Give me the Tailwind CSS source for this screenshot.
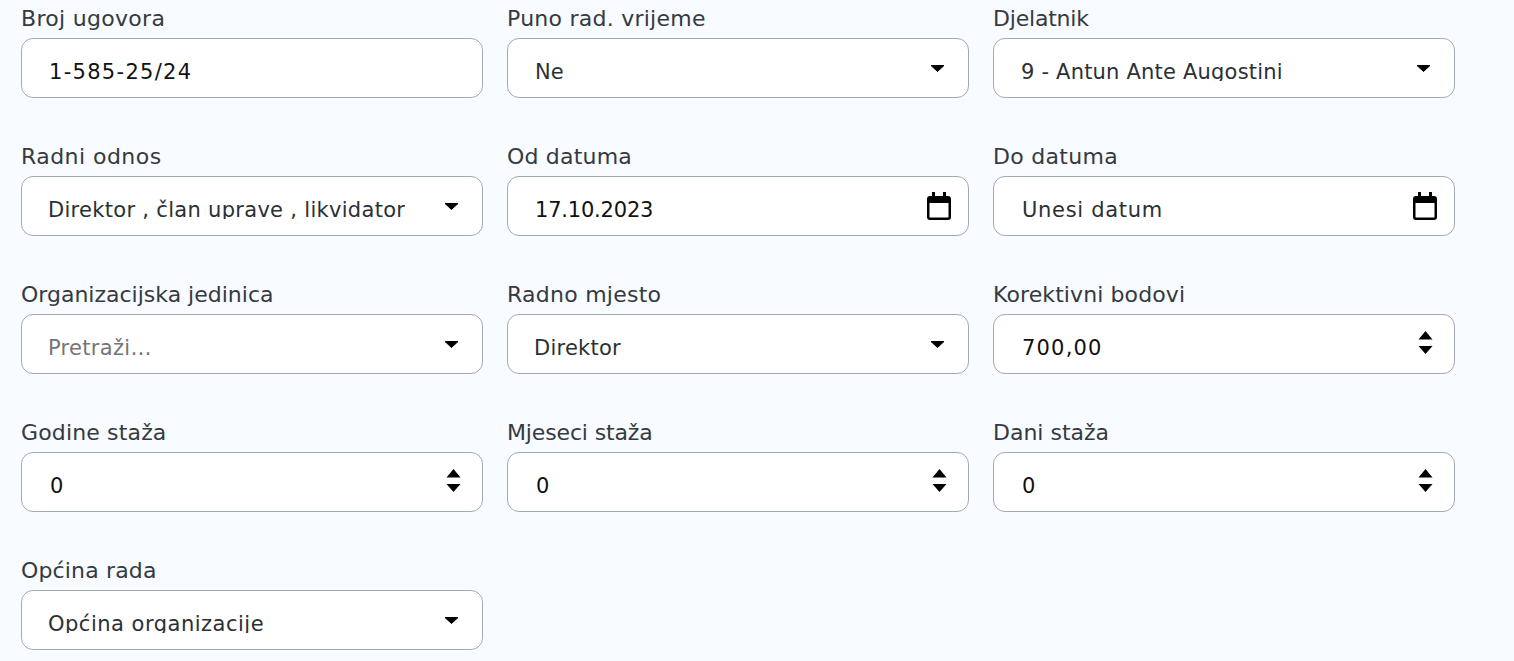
<!DOCTYPE html>
<html lang="hr">
<head>
<meta charset="UTF-8">
<title>Ugovor</title>
<script src="https://cdn.jsdelivr.net/npm/@tailwindcss/browser@4"></script>
</head>
<body class="bg-[#f8fbff] h-[661px] overflow-hidden font-['DejaVu_Sans',sans-serif] text-[#2b3035]">
<div class="grid grid-cols-[462px_462px_462px] gap-x-[24px] gap-y-[44px] pl-[21px] pt-[4px] text-[21px]">

  <div>
    <label class="block h-[34px] leading-[30px] text-[22px] text-[#343a40] tracking-[0.3px]">Broj ugovora</label>
    <div class="h-[60px] bg-white border border-[#a3a9b3] rounded-[12px] flex items-center justify-between pl-[27px] pr-[21px] pt-[10px] text-[#111]"><span class="tracking-[1.3px]">1-585-25/24</span></div>
  </div>
  <div>
    <label class="block h-[34px] leading-[30px] text-[22px] text-[#343a40] tracking-[0.25px]">Puno rad. vrijeme</label>
    <div class="h-[60px] bg-white border border-[#a3a9b3] rounded-[12px] flex items-center justify-between pl-[27px] pr-[23px] pt-[10px]"><span>Ne</span>
      <svg class="w-[15px] h-[7px] -mt-[10px]" viewBox="0 0 15 7"><path d="M1 0.5h13L7.5 6.5z" fill="#000" stroke="#000" stroke-linejoin="round"/></svg></div>
  </div>
  <div>
    <label class="block h-[34px] leading-[30px] text-[22px] text-[#343a40] tracking-[-0.2px]">Djelatnik</label>
    <div class="h-[60px] bg-white border border-[#a3a9b3] rounded-[12px] flex items-center justify-between pl-[27px] pr-[23px] pt-[10px]"><span class="self-start h-[32px] leading-[47px] overflow-hidden tracking-[0.2px]">9 - Antun Ante Augostini</span>
      <svg class="w-[15px] h-[7px] -mt-[10px]" viewBox="0 0 15 7"><path d="M1 0.5h13L7.5 6.5z" fill="#000" stroke="#000" stroke-linejoin="round"/></svg></div>
  </div>

  <div>
    <label class="block h-[34px] leading-[30px] text-[22px] text-[#343a40] tracking-[0.45px]">Radni odnos</label>
    <div class="h-[60px] bg-white border border-[#a3a9b3] rounded-[12px] flex items-center justify-between pl-[26px] pr-[23px] pt-[10px]"><span class="self-start h-[32px] leading-[47px] overflow-hidden tracking-[0.3px]">Direktor , član uprave , likvidator</span>
      <svg class="w-[15px] h-[7px] -mt-[10px]" viewBox="0 0 15 7"><path d="M1 0.5h13L7.5 6.5z" fill="#000" stroke="#000" stroke-linejoin="round"/></svg></div>
  </div>
  <div>
    <label class="block h-[34px] leading-[30px] text-[22px] text-[#343a40] tracking-[0.2px]">Od datuma</label>
    <div class="h-[60px] bg-white border border-[#a3a9b3] rounded-[12px] flex items-center justify-between pl-[27px] pr-[16px] pt-[10px] text-[#111]"><span class="tracking-[-0.2px]">17.10.2023</span>
      <svg class="w-[26px] h-[28px] -mt-[10px]" viewBox="0 0 26 28"><path d="M6 0h3v4h8V0h3v4h2a3 3 0 0 1 3 3v18a3 3 0 0 1-3 3H4a3 3 0 0 1-3-3V7a3 3 0 0 1 3-3h2zM3.500 11v14.500h19V11z" fill="#000" fill-rule="evenodd"/></svg></div>
  </div>
  <div>
    <label class="block h-[34px] leading-[30px] text-[22px] text-[#343a40] tracking-[0.3px]">Do datuma</label>
    <div class="h-[60px] bg-white border border-[#a3a9b3] rounded-[12px] flex items-center justify-between pl-[28px] pr-[16px] pt-[10px]"><span class="tracking-[0.7px]">Unesi datum</span>
      <svg class="w-[26px] h-[28px] -mt-[10px]" viewBox="0 0 26 28"><path d="M6 0h3v4h8V0h3v4h2a3 3 0 0 1 3 3v18a3 3 0 0 1-3 3H4a3 3 0 0 1-3-3V7a3 3 0 0 1 3-3h2zM3.500 11v14.500h19V11z" fill="#000" fill-rule="evenodd"/></svg></div>
  </div>

  <div>
    <label class="block h-[34px] leading-[30px] text-[22px] text-[#343a40]">Organizacijska jedinica</label>
    <div class="h-[60px] bg-white border border-[#a3a9b3] rounded-[12px] flex items-center justify-between pl-[26px] pr-[23px] pt-[10px] text-[#757575]"><span class="tracking-[0.3px]">Pretraži…</span>
      <svg class="w-[15px] h-[7px] -mt-[10px]" viewBox="0 0 15 7"><path d="M1 0.5h13L7.5 6.5z" fill="#000" stroke="#000" stroke-linejoin="round"/></svg></div>
  </div>
  <div>
    <label class="block h-[34px] leading-[30px] text-[22px] text-[#343a40] tracking-[0.25px]">Radno mjesto</label>
    <div class="h-[60px] bg-white border border-[#a3a9b3] rounded-[12px] flex items-center justify-between pl-[26px] pr-[23px] pt-[10px]"><span class="tracking-[0.25px]">Direktor</span>
      <svg class="w-[15px] h-[7px] -mt-[10px]" viewBox="0 0 15 7"><path d="M1 0.5h13L7.5 6.5z" fill="#000" stroke="#000" stroke-linejoin="round"/></svg></div>
  </div>
  <div>
    <label class="block h-[34px] leading-[30px] text-[22px] text-[#343a40] tracking-[0.1px]">Korektivni bodovi</label>
    <div class="h-[60px] bg-white border border-[#a3a9b3] rounded-[12px] flex items-center justify-between pl-[28px] pr-[21px] pt-[10px] text-[#111]"><span class="tracking-[1.2px]">700,00</span>
      <svg class="w-[15px] h-[23px] -mt-[13px]" viewBox="0 0 15 23"><path d="M7.500 0l7 8.500H.5zM.5 15h14l-7 8z" fill="#000"/></svg></div>
  </div>

  <div>
    <label class="block h-[34px] leading-[30px] text-[22px] text-[#343a40] tracking-[0.15px]">Godine staža</label>
    <div class="h-[60px] bg-white border border-[#a3a9b3] rounded-[12px] flex items-center justify-between pl-[28px] pr-[21px] pt-[10px] text-[#111]"><span>0</span>
      <svg class="w-[15px] h-[23px] -mt-[13px]" viewBox="0 0 15 23"><path d="M7.500 0l7 8.500H.5zM.5 15h14l-7 8z" fill="#000"/></svg></div>
  </div>
  <div>
    <label class="block h-[34px] leading-[30px] text-[22px] text-[#343a40] tracking-[-0.15px]">Mjeseci staža</label>
    <div class="h-[60px] bg-white border border-[#a3a9b3] rounded-[12px] flex items-center justify-between pl-[28px] pr-[21px] pt-[10px] text-[#111]"><span>0</span>
      <svg class="w-[15px] h-[23px] -mt-[13px]" viewBox="0 0 15 23"><path d="M7.500 0l7 8.500H.5zM.5 15h14l-7 8z" fill="#000"/></svg></div>
  </div>
  <div>
    <label class="block h-[34px] leading-[30px] text-[22px] text-[#343a40]">Dani staža</label>
    <div class="h-[60px] bg-white border border-[#a3a9b3] rounded-[12px] flex items-center justify-between pl-[28px] pr-[21px] pt-[10px] text-[#111]"><span>0</span>
      <svg class="w-[15px] h-[23px] -mt-[13px]" viewBox="0 0 15 23"><path d="M7.500 0l7 8.500H.5zM.5 15h14l-7 8z" fill="#000"/></svg></div>
  </div>

  <div>
    <label class="block h-[34px] leading-[30px] text-[22px] text-[#343a40] tracking-[0.15px]">Općina rada</label>
    <div class="h-[60px] bg-white border border-[#a3a9b3] rounded-[12px] flex items-center justify-between pl-[26px] pr-[23px] pt-[10px]"><span class="self-start h-[32px] leading-[47px] overflow-hidden tracking-[0.5px]">Općina organizacije</span>
      <svg class="w-[15px] h-[7px] -mt-[10px]" viewBox="0 0 15 7"><path d="M1 0.5h13L7.5 6.5z" fill="#000" stroke="#000" stroke-linejoin="round"/></svg></div>
  </div>

</div>
</body>
</html>
